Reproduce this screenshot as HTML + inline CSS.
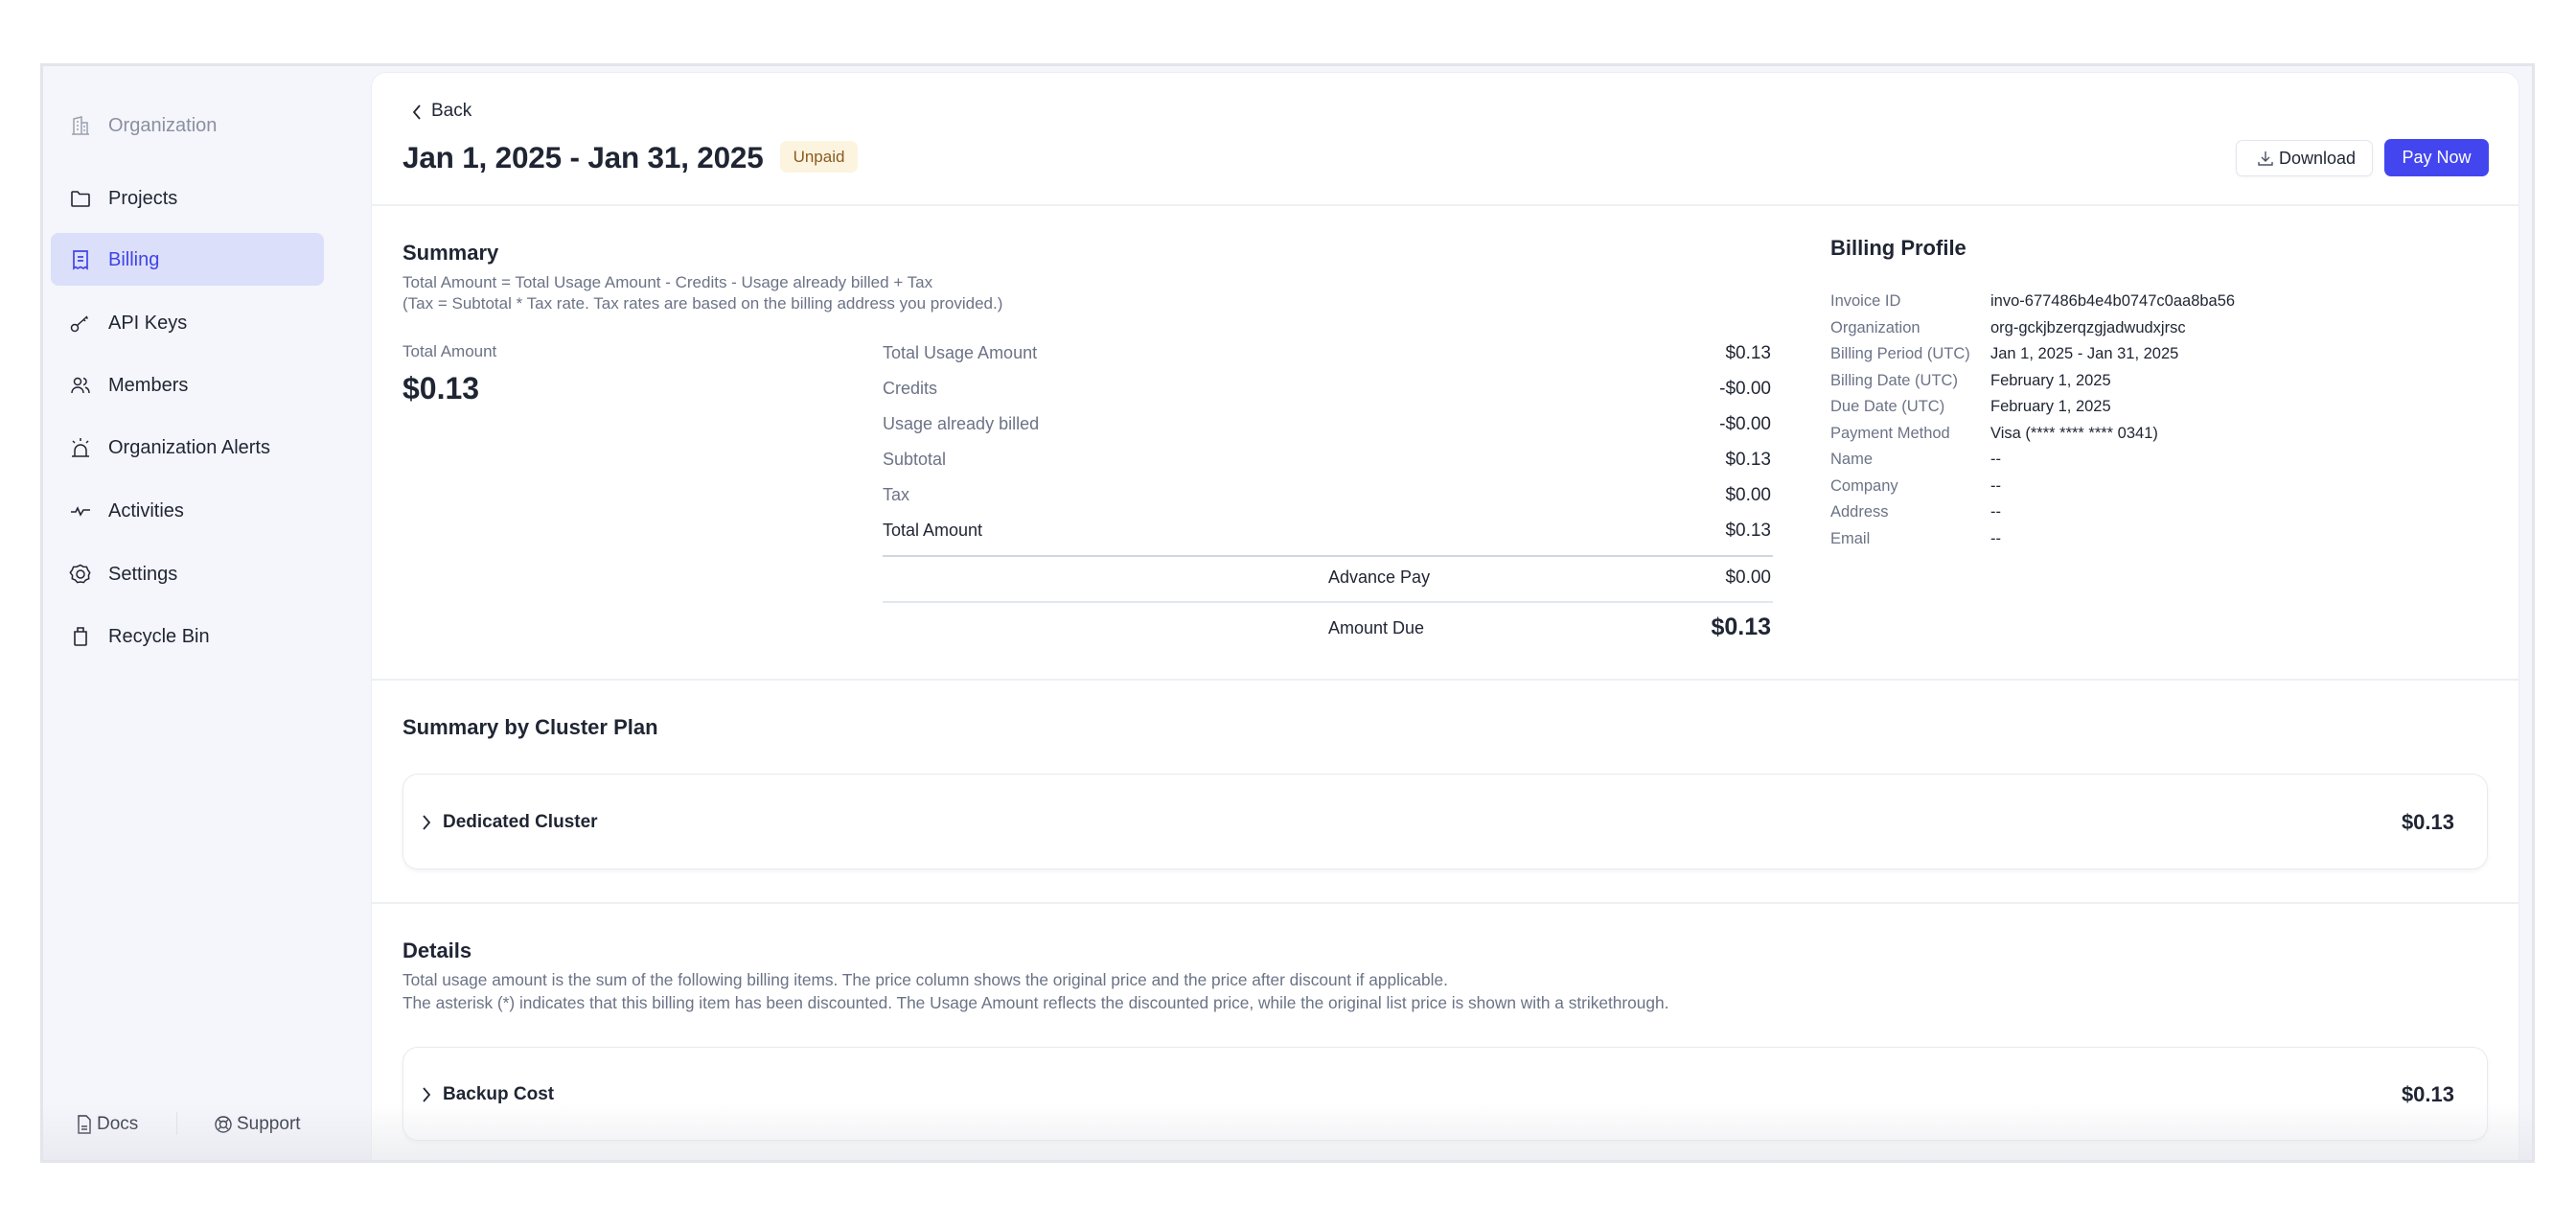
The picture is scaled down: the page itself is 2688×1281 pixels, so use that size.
<!DOCTYPE html>
<html><head><meta charset="utf-8">
<style>
*{margin:0;padding:0;box-sizing:border-box}
html,body{width:2688px;height:1281px;background:#fff;overflow:hidden;font-family:"Liberation Sans",sans-serif;color:#1f2533}
.a{position:absolute;white-space:nowrap}
#frame{position:absolute;left:42px;top:66px;width:2603px;height:1147px;border:3px solid #e3e4ec;background:#f5f6fb;overflow:hidden}
#main{position:absolute;left:342px;top:6px;width:2242px;height:1160px;background:#fff;border-radius:16px;border:1px solid #eceef4}
.nav{position:absolute;left:68px;font-size:20px;line-height:24px;color:#1f2533}
.g{color:#6b7386}
.hr{position:absolute;height:2px;background:#eef0f4}
.card{position:absolute;left:32px;width:2176px;border:1px solid #e8eaf0;border-radius:16px;box-shadow:0 2px 4px rgba(20,30,60,.05)}
</style></head><body>
<div id="frame">
  <svg class="a" style="left:27px;top:50px" width="24" height="24" viewBox="0 0 24 24" fill="none" stroke="#9aa0ae" stroke-width="1.5"><path d="M3 21h18M5 21V5l8-2v18M13 9h6v12M8 8h2M8 12h2M8 16h2M15 13h2M15 17h2"/></svg>
  <div class="nav" style="left:68px;top:50px;color:#8a90a0">Organization</div>

  <svg class="a" style="left:27px;top:126px" width="24" height="24" viewBox="0 0 24 24" fill="none" stroke="#1f2533" stroke-width="1.6"><path d="M3 6a1 1 0 0 1 1-1h5l2 2.5h9a1 1 0 0 1 1 1V19a1 1 0 0 1-1 1H4a1 1 0 0 1-1-1z"/></svg>
  <div class="nav" style="top:126px">Projects</div>

  <div class="a" style="left:8px;top:174px;width:285px;height:55px;background:#dcdffa;border-radius:8px"></div>
  <svg class="a" style="left:27px;top:190px" width="24" height="24" viewBox="0 0 24 24" fill="none" stroke="#4044e6" stroke-width="1.7"><path d="M5 3h14v18l-2-1.5-2 1.5-3-1.5-3 1.5-2-1.5L5 21z M9 9h6M9 13h6"/></svg>
  <div class="nav" style="top:190px;color:#4044e6">Billing</div>

  <svg class="a" style="left:27px;top:256px" width="24" height="24" viewBox="0 0 24 24" fill="none" stroke="#1f2533" stroke-width="1.5"><circle cx="6" cy="17" r="3.5"/><path d="M8.5 14.5 19 5M15 8l2 2M17.5 5.5l2 2"/></svg>
  <div class="nav" style="top:256px">API Keys</div>

  <svg class="a" style="left:27px;top:321px" width="24" height="24" viewBox="0 0 24 24" fill="none" stroke="#1f2533" stroke-width="1.5"><circle cx="9" cy="8" r="3.5"/><path d="M3 20c0-4 3-6 6-6s6 2 6 6M15 4.5c2 .5 3 2 3 3.5s-1 3-3 3.5M17 14c2.5 1 4 3 4 6"/></svg>
  <div class="nav" style="top:321px">Members</div>

  <svg class="a" style="left:27px;top:386px" width="24" height="24" viewBox="0 0 24 24" fill="none" stroke="#1f2533" stroke-width="1.5"><path d="M3 21h18M6 21v-6a6 6 0 0 1 12 0v6M12 2v3M4 5l2 2M20 5l-2 2"/></svg>
  <div class="nav" style="top:386px">Organization Alerts</div>

  <svg class="a" style="left:27px;top:452px" width="24" height="24" viewBox="0 0 24 24" fill="none" stroke="#1f2533" stroke-width="1.6"><path d="M2 13h5l2-4 3 7 3-5h7"/></svg>
  <div class="nav" style="top:452px">Activities</div>

  <svg class="a" style="left:27px;top:518px" width="24" height="24" viewBox="0 0 24 24" fill="none" stroke="#1f2533" stroke-width="1.5"><path d="M12 2.5l3 1.7 3.4.2 1.3 3.2 2 2.7-1.3 3 .3 3.4-3.2 1.3-2.2 2.6-3.3-.6-3.3.6-2.2-2.6-3.2-1.3.3-3.4L1.3 10.3l2-2.7L4.6 4.4 8 4.2z"/><circle cx="12" cy="12" r="4"/></svg>
  <div class="nav" style="top:518px">Settings</div>

  <svg class="a" style="left:27px;top:583px" width="24" height="24" viewBox="0 0 24 24" fill="none" stroke="#1f2533" stroke-width="1.6"><path d="M6 7h12v13a1 1 0 0 1-1 1H7a1 1 0 0 1-1-1zM9 7V3h6v4"/></svg>
  <div class="nav" style="top:583px">Recycle Bin</div>

  <svg class="a" style="left:34px;top:1094px" width="18" height="20" viewBox="0 0 18 20" fill="none" stroke="#1f2533" stroke-width="1.4"><path d="M3 1h8l4 4v14H3zM6 12h6M6 15h6"/></svg>
  <div class="a" style="left:56px;top:1093px;font-size:19px;color:#1f2533">Docs</div>
  <div class="a" style="left:139px;top:1091px;width:1px;height:24px;background:#dfe2ea"></div>
  <svg class="a" style="left:178px;top:1094px" width="20" height="20" viewBox="0 0 20 20" fill="none" stroke="#1f2533" stroke-width="1.4"><circle cx="10" cy="10" r="8"/><circle cx="10" cy="10" r="3.5"/><path d="M5 5l2.5 2.5M15 5l-2.5 2.5M5 15l2.5-2.5M15 15l-2.5-2.5"/></svg>
  <div class="a" style="left:202px;top:1093px;font-size:19px;color:#1f2533">Support</div>

  <div id="main">
    <svg class="a" style="left:40px;top:31px" width="14" height="20" viewBox="0 0 14 20" fill="none" stroke="#1f2533" stroke-width="1.8"><path d="M10 3 4 10l6 7"/></svg>
    <div class="a" style="left:62px;top:29px;font-size:19px">Back</div>
    <div class="a" style="left:32px;top:70px;font-size:31.5px;font-weight:bold;letter-spacing:-0.2px">Jan 1, 2025 - Jan 31, 2025</div>
    <div class="a" style="left:426px;top:71px;width:81px;height:33px;background:#fdf4df;border-radius:7px;color:#8a5b22;font-size:17px;line-height:33px;text-align:center">Unpaid</div>

    <div class="a" style="left:1945px;top:70px;width:143px;height:38px;border:1px solid #e3e6ee;border-radius:7px;box-shadow:0 1px 2px rgba(0,0,0,.05);font-size:18px;line-height:36px;padding-left:44px">Download</div>
    <svg class="a" style="left:1968px;top:81px" width="16" height="16" viewBox="0 0 16 16" fill="none" stroke="#4b5263" stroke-width="1.4"><path d="M8 1v10M4 7l4 4 4-4M1 12v3h14v-3"/></svg>
    <div class="a" style="left:2100px;top:69px;width:109px;height:39px;background:#4346ef;border-radius:7px;color:#fff;font-size:18px;line-height:39px;text-align:center">Pay Now</div>

    <div class="hr" style="left:0;right:0;top:137px"></div>

    <div class="a" style="left:32px;top:175px;font-size:22px;font-weight:bold">Summary</div>
    <div class="a g" style="left:32px;top:209px;font-size:17px">Total Amount = Total Usage Amount - Credits - Usage already billed + Tax</div>
    <div class="a g" style="left:32px;top:231px;font-size:17px">(Tax = Subtotal * Tax rate. Tax rates are based on the billing address you provided.)</div>
    <div class="a g" style="left:32px;top:281px;font-size:17px">Total Amount</div>
    <div class="a" style="left:32px;top:311px;font-size:32px;font-weight:bold">$0.13</div>

    <div class="a g" style="left:533px;top:282px;font-size:18px">Total Usage Amount</div>
    <div class="a g" style="left:533px;top:319px;font-size:18px">Credits</div>
    <div class="a g" style="left:533px;top:356px;font-size:18px">Usage already billed</div>
    <div class="a g" style="left:533px;top:393px;font-size:18px">Subtotal</div>
    <div class="a g" style="left:533px;top:430px;font-size:18px">Tax</div>
    <div class="a" style="left:533px;top:467px;font-size:18px">Total Amount</div>
    <div class="a" style="right:780px;top:282px;font-size:19px">$0.13</div>
    <div class="a" style="right:780px;top:319px;font-size:19px">-$0.00</div>
    <div class="a" style="right:780px;top:356px;font-size:19px">-$0.00</div>
    <div class="a" style="right:780px;top:393px;font-size:19px">$0.13</div>
    <div class="a" style="right:780px;top:430px;font-size:19px">$0.00</div>
    <div class="a" style="right:780px;top:467px;font-size:19px">$0.13</div>
    <div class="hr" style="left:533px;width:929px;top:503px;background:#cfd6e4"></div>
    <div class="a" style="left:998px;top:516px;font-size:18px">Advance Pay</div>
    <div class="a" style="right:780px;top:516px;font-size:19px">$0.00</div>
    <div class="hr" style="left:533px;width:929px;top:551px;background:#e2e7ef"></div>
    <div class="a" style="left:998px;top:569px;font-size:18px">Amount Due</div>
    <div class="a" style="right:780px;top:564px;font-size:25px;font-weight:bold">$0.13</div>

    <div class="a" style="left:1522px;top:170px;font-size:22px;font-weight:bold">Billing Profile</div>
    <div class="a g" style="left:1522px;top:225px;font-size:16.5px;line-height:27.5px">Invoice ID<br>Organization<br>Billing Period (UTC)<br>Billing Date (UTC)<br>Due Date (UTC)<br>Payment Method<br>Name<br>Company<br>Address<br>Email</div>
    <div class="a" style="left:1689px;top:225px;font-size:16.5px;line-height:27.5px">invo-677486b4e4b0747c0aa8ba56<br>org-gckjbzerqzgjadwudxjrsc<br>Jan 1, 2025 - Jan 31, 2025<br>February 1, 2025<br>February 1, 2025<br>Visa (**** **** **** 0341)<br>--<br>--<br>--<br>--</div>

    <div class="hr" style="left:0;right:0;top:632px"></div>
    <div class="a" style="left:32px;top:670px;font-size:22px;font-weight:bold">Summary by Cluster Plan</div>
    <div class="card" style="top:731px;height:100px">
      <svg class="a" style="left:18px;top:40px" width="12" height="20" viewBox="0 0 12 20" fill="none" stroke="#1f2533" stroke-width="1.8"><path d="M3 3l6 7-6 7"/></svg>
      <div class="a" style="left:41px;top:39px;font-size:19px;font-weight:bold">Dedicated Cluster</div>
      <div class="a" style="right:34px;top:37px;font-size:22px;font-weight:bold">$0.13</div>
    </div>

    <div class="hr" style="left:0;right:0;top:865px"></div>
    <div class="a" style="left:32px;top:903px;font-size:22px;font-weight:bold">Details</div>
    <div class="a g" style="left:32px;top:936px;font-size:17.3px">Total usage amount is the sum of the following billing items. The price column shows the original price and the price after discount if applicable.</div>
    <div class="a g" style="left:32px;top:960px;font-size:17.3px">The asterisk (*) indicates that this billing item has been discounted. The Usage Amount reflects the discounted price, while the original list price is shown with a strikethrough.</div>
    <div class="card" style="top:1016px;height:98px">
      <svg class="a" style="left:18px;top:39px" width="12" height="20" viewBox="0 0 12 20" fill="none" stroke="#1f2533" stroke-width="1.8"><path d="M3 3l6 7-6 7"/></svg>
      <div class="a" style="left:41px;top:38px;font-size:19px;font-weight:bold">Backup Cost</div>
      <div class="a" style="right:34px;top:36px;font-size:22px;font-weight:bold">$0.13</div>
    </div>
  </div>
  <div class="a" style="left:0;right:0;bottom:0;height:60px;background:linear-gradient(rgba(225,226,232,0),rgba(225,226,232,.55))"></div>
</div>
</body></html>
